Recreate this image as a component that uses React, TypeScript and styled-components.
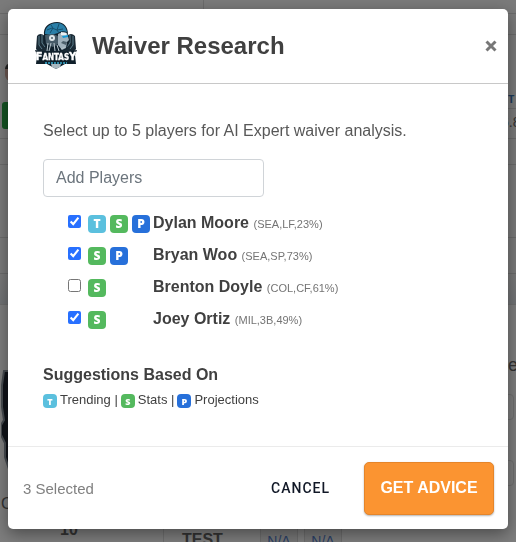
import React, { useState } from "react";
import styled, { createGlobalStyle } from "styled-components";

const GlobalStyle = createGlobalStyle`
  *, *::before, *::after { box-sizing: border-box; }
  body {
    margin: 0;
    background: #f4f4f4;
    color: #404040;
    font-family: "Liberation Sans", Arial, sans-serif;
    font-size: 16px;
    overflow: hidden;
  }
`;

/* ---------- page behind the dialog ---------- */

const Page = styled.div`
  height: 100vh;
  overflow: hidden;
  color: #666;
`;

const Strip = styled.div<{ $h: number }>`
  display: flex;
  justify-content: space-between;
  height: ${(p) => p.$h}px;
  border-bottom: 1px solid #d6d6d6;
`;

const TopTab = styled.div`
  width: 204px;
  border-right: 1px solid #d6d6d6;
`;

const Tools = styled.div`
  display: flex;
  flex-direction: column;
  justify-content: space-between;
  padding: 28px 0 9px 2px;
`;

const Avatar = styled.span`
  width: 20px;
  height: 18px;
  margin-left: 3px;
  border-radius: 6px;
  border-top: 6px solid #444;
  background: #d8b0a4;
`;

const AddButton = styled.button`
  width: 30px;
  height: 27px;
  border: 0;
  border-radius: 3px;
  background: #28a745;
`;

const Scores = styled.div`
  display: flex;
  flex-direction: column;
  width: 24px;
  padding-top: 54px;
`;

const ScoreHead = styled.span`
  height: 20px;
  padding: 4px 0 0 9px;
  border-bottom: 1px solid #d6d6d6;
  color: #3c78b4;
  font: bold 11px/12px "Open Sans", sans-serif;
  white-space: nowrap;
`;

const ScoreValue = styled.span`
  padding: 5px 0 0 9px;
  font-size: 14px;
  line-height: 16px;
`;

const Band = styled.div`
  height: 30px;
  background: linear-gradient(#f2f2f2, #e2e6ea);
`;

const Card = styled.div`
  background: #fafafa;
  border-top: 1px solid #ddd;
`;

const CardTop = styled.div`
  display: flex;
  justify-content: space-between;
  height: 215px;
`;

const Team = styled.div`
  display: flex;
  flex-direction: column;
  gap: 24px;
  padding-top: 64px;
  padding-left: 1px;
`;

const Side = styled.div`
  display: flex;
  flex-direction: column;
  gap: 40px;
  width: 18px;
  padding-top: 50px;
`;

const SideItem = styled.div`
  display: flex;
  flex-direction: column;
  gap: 19px;
  font-size: 18px;
  line-height: 20px;
`;

const SideBox = styled.span`
  width: 16px;
  height: 26px;
  border: 1px solid #ddd;
  border-radius: 4px;
`;

const TeamRow = styled.div`
  display: grid;
  grid-template-columns: 164px 96px 1fr;
  height: 40px;
  font-weight: bold;
`;

const Rank = styled.span`
  padding: 1px 0 0 60px;
  border-right: 1px solid #ddd;
`;

const TeamName = styled.span`
  padding: 11px 0 0 18px;
`;

const Tags = styled.span`
  display: flex;
  gap: 6px;
`;

const Tag = styled.span`
  width: 38px;
  margin-top: 6px;
  padding-top: 6px;
  border: 1px solid #d8d8d8;
  background: #eee;
  color: #5580cc;
  font-weight: normal;
  font-size: 14px;
  line-height: 16px;
  text-align: center;
`;

/* ---------- dialog ---------- */

const Backdrop = styled.div`
  position: fixed;
  inset: 0;
  padding: 9px 8px;
  background: rgba(0, 0, 0, 0.5);
`;

const Dialog = styled.section`
  max-width: 640px;
  margin: 0 auto;
  border-radius: 5px;
  background: #fff;
  box-shadow: 0 5px 16px rgba(0, 0, 0, 0.4);
`;

const Header = styled.header`
  display: flex;
  align-items: center;
  gap: 12px;
  height: 75px;
  padding: 0 11px 0 24px;
  border-bottom: 1px solid #c8c8c8;
`;

const Title = styled.h2`
  flex: 1;
  margin: 0;
  font-size: 24px;
  line-height: 28px;
`;

const CloseButton = styled.button`
  display: flex;
  padding: 0;
  border: 0;
  background: none;
  color: #777;
  cursor: pointer;
`;

const Body = styled.div`
  padding: 37px 35px 38px;
`;

const Intro = styled.label`
  display: block;
  line-height: 20px;
  color: #585858;
`;

const Search = styled.input`
  display: block;
  width: 221px;
  height: 38px;
  margin-top: 18px;
  padding: 0 12px;
  border: 1px solid #d0d4d8;
  border-radius: 4px;
  font: inherit;
  color: #495057;
  &::placeholder { color: #6c757d; opacity: 1; }
`;

const Players = styled.ul`
  margin: 10px 0 0;
  padding: 0 0 0 25px;
  list-style: none;
`;

const Player = styled.li`
  display: flex;
  align-items: center;
  height: 32px;
`;

const Check = styled.input`
  width: 13px;
  height: 13px;
  margin: 0 7px 4px 0;
  accent-color: #2870ff;
`;

const Badges = styled.span`
  display: flex;
  gap: 4px;
  width: 65px;
  padding-top: 2px;
`;

const Badge = styled.span<{ $color: string; $small?: boolean }>`
  display: inline-flex;
  align-items: center;
  justify-content: center;
  width: ${(p) => (p.$small ? 14 : 18)}px;
  height: ${(p) => (p.$small ? 14 : 18)}px;
  border-radius: 4px;
  background: ${(p) => p.$color};
  color: #fff;
  font: 800 ${(p) => (p.$small ? 9 : 12)}px/1 "Open Sans", sans-serif;
`;

const PlayerLabel = styled.label`
  font-weight: bold;
  white-space: nowrap;
`;

const Meta = styled.small`
  font-size: 11px;
  font-weight: normal;
  color: #747474;
`;

const Subtitle = styled.h3`
  margin: 30px 0 0;
  font-size: 16px;
  line-height: 20px;
`;

const Legend = styled.div`
  display: flex;
  align-items: center;
  gap: 3px;
  margin-top: 7px;
  font-size: 13px;
  line-height: 16px;
`;

const LegendBadge = styled(Badge)`
  margin-top: 2px;
`;

const Footer = styled.footer`
  display: flex;
  align-items: center;
  height: 83px;
  padding: 0 14px 0 15px;
  border-top: 1px solid #ebebeb;
`;

const Count = styled.span`
  flex: 1;
  font-size: 15px;
  color: #808080;
`;

const Cancel = styled.button`
  margin-right: 20px;
  padding: 8px 14px;
  border: 0;
  background: none;
  color: #111827;
  font: 500 14px/18px Roboto, sans-serif;
  letter-spacing: 1px;
  cursor: pointer;
`;

const Submit = styled.button`
  width: 130px;
  height: 53px;
  padding: 0 0 1px;
  border: 1px solid #e5852a;
  border-radius: 5px;
  background: #fb9431;
  box-shadow: 0 1px 2px rgba(0, 0, 0, 0.3);
  color: #fff;
  font: bold 16px/20px "Liberation Sans", Arial, sans-serif;
  cursor: pointer;
`;

function Logo() {
  return (
    <svg width="48" height="50" viewBox="0 0 48 50" role="img" aria-label="Fantasy">
      <path d="M5 15Q8 11 13 15L20 34H9L4 28ZM43 15Q39 11 35 15L28 34H39L44 28Z" fill="#1a2a35" />
      <path d="M7 15v9l3 4M10 14v8l3 4M41 15v9l-3 4M38 14v8l-3 4" fill="none" stroke="#5a7c8b" strokeWidth="1" />
      <path d="M12 14C11 6 17 1 25 1C32 1 36 6 36 13L38 20 36 22 35 28 30 30 29 36H14L15 28Q11 22 12 14Z" fill="#10212d" />
      <path d="M13 13C13 6 18 2 25 2C30 2 34 5 35 11Q29 9 26 12L19 14Z" fill="#2a7fa8" />
      <path d="M15 9l5-2 5 2 6-1M19 4l2 3-3 5M27 3l-2 6 2 3" fill="none" stroke="#17506e" strokeWidth="1" />
      <path d="M26 13Q31 10 35 12L37 19 35 21 34 27 30 29 26 24Z" fill="#9fb1bc" />
      <path d="M29 11l5 1 1 3-6-1z" fill="#e9f0f3" />
      <path d="M30 15l6-1v2l-5 1z" fill="#1598d4" />
      <path d="M31 20l4 1-1 3-5-2z" fill="#4c606c" />
      <path d="M13 14l8-1 5 2v8l-5 3-7-3z" fill="#465b68" />
      <circle cx="20" cy="17" r="3" fill="#dde6ea" />
      <circle cx="20" cy="17" r="1" fill="#4c606b" />
      <path d="M16 22l-1 8M19 22l-2 8M22 22l1 8M25 24l2 6M29 28l4-2" stroke="#b7c5cc" strokeWidth="1" />
      <path d="M3 29Q24 33 45 29L43 34 44 43 33 43 24 48 15 43 4 43 5 34Z" fill="#0f1f2a" />
      <path d="M19 43h10l-1 3-4 2-4-2z" fill="#a9b8c0" />
      <text x="24" y="39" textAnchor="middle" fill="#fff" stroke="#fff" strokeWidth=".3" fontFamily="DejaVu Sans Condensed, DejaVu Sans, sans-serif" fontWeight="bold" fontSize="8"><tspan fontSize="11">F</tspan>ANTAS<tspan fontSize="11">Y</tspan></text>
      <path d="M13 42h22" stroke="#2d89a7" strokeWidth="2" strokeDasharray="2 1" />
    </svg>
  );
}

function Crest() {
  return (
    <svg width="40" height="102" viewBox="0 0 40 102" aria-hidden="true">
      <path d="M3 2H36V100H8L4 88V74L0 66V56L3 51L1 38V16Z" fill="#202632" stroke="#8b949e" strokeWidth="2" />
    </svg>
  );
}

type Kind = "T" | "S" | "P";
const colors: Record<Kind, string> = { T: "#5bc0de", S: "#54b95e", P: "#2770da" };

const players: { name: string; meta: string; kinds: Kind[] }[] = [
  { name: "Dylan Moore", meta: "(SEA,LF,23%)", kinds: ["T", "S", "P"] },
  { name: "Bryan Woo", meta: "(SEA,SP,73%)", kinds: ["S", "P"] },
  { name: "Brenton Doyle", meta: "(COL,CF,61%)", kinds: ["S"] },
  { name: "Joey Ortiz", meta: "(MIL,3B,49%)", kinds: ["S"] },
];

export default function App() {
  const [selected, setSelected] = useState([true, true, false, true]);
  const toggle = (i: number) => setSelected(selected.map((v, n) => (n === i ? !v : v)));

  return (
    <>
      <GlobalStyle />
      <Page aria-hidden="true">
        <Strip $h={14}><TopTab /></Strip>
        <Strip $h={21} />
        <Strip $h={104}>
          <Tools><Avatar /><AddButton tabIndex={-1} /></Tools>
          <Scores><ScoreHead>PT</ScoreHead><ScoreValue>6.8</ScoreValue></Scores>
        </Strip>
        <Strip $h={26} />
        <Strip $h={73} />
        <Strip $h={36} />
        <Band />
        <Card>
          <CardTop>
            <Team><Crest /><span>C</span></Team>
            <Side>
              <SideItem>ue<SideBox /></SideItem>
              <SideBox />
            </Side>
          </CardTop>
          <TeamRow>
            <Rank>10</Rank>
            <TeamName>TEST</TeamName>
            <Tags><Tag>N/A</Tag><Tag>N/A</Tag></Tags>
          </TeamRow>
        </Card>
      </Page>
      <Backdrop>
        <Dialog role="dialog" aria-labelledby="dialog-title">
          <Header>
            <Logo />
            <Title id="dialog-title">Waiver Research</Title>
            <CloseButton aria-label="Close">
              <svg width="12" height="12" viewBox="0 0 12 12" aria-hidden="true">
                <path d="M1.5 1.5l9 9M10.5 1.5l-9 9" stroke="currentColor" strokeWidth="3" />
              </svg>
            </CloseButton>
          </Header>
          <Body>
            <Intro htmlFor="search">Select up to 5 players for AI Expert waiver analysis.</Intro>
            <Search id="search" type="text" placeholder="Add Players" />
            <Players>
              {players.map((p, i) => (
                <Player key={p.name}>
                  <Check id={`player-${i}`} type="checkbox" checked={selected[i]} onChange={() => toggle(i)} />
                  <Badges>
                    {p.kinds.map((k) => <Badge key={k} $color={colors[k]}>{k}</Badge>)}
                  </Badges>
                  <PlayerLabel htmlFor={`player-${i}`}>{p.name} <Meta>{p.meta}</Meta></PlayerLabel>
                </Player>
              ))}
            </Players>
            <Subtitle>Suggestions Based On</Subtitle>
            <Legend>
              <LegendBadge $small $color={colors.T}>T</LegendBadge><span>Trending |</span>
              <LegendBadge $small $color={colors.S}>S</LegendBadge><span>Stats |</span>
              <LegendBadge $small $color={colors.P}>P</LegendBadge><span>Projections</span>
            </Legend>
          </Body>
          <Footer>
            <Count>{selected.filter(Boolean).length} Selected</Count>
            <Cancel>CANCEL</Cancel>
            <Submit>GET ADVICE</Submit>
          </Footer>
        </Dialog>
      </Backdrop>
    </>
  );
}
